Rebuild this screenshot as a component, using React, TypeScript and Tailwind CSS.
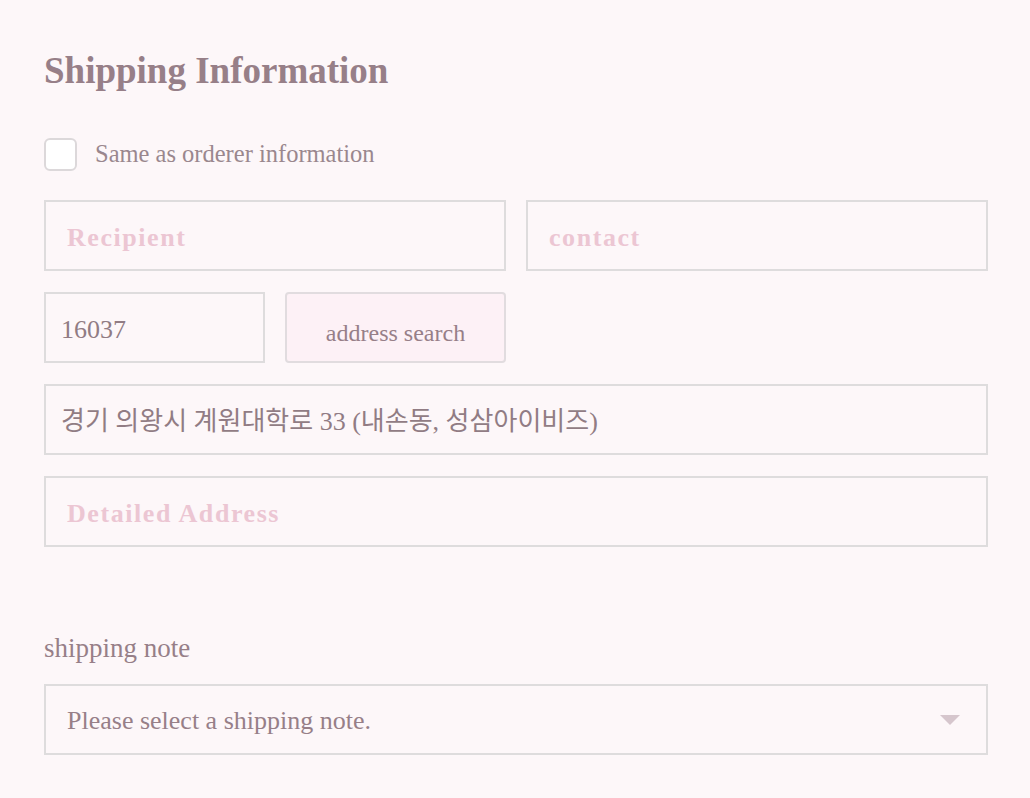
import React from "react";

const serif = "font-['Liberation_Serif','Noto_Sans_CJK_KR',serif]";

function Field({
  placeholder,
  value,
  className = "",
}: {
  placeholder?: string;
  value?: string;
  className?: string;
}) {
  return (
    <div
      className={`flex h-[71px] items-center border-2 border-[#dedcdd] bg-[#fdf7f9] pt-[4px] ${value ? "pl-[15px]" : "pl-[21px]"} ${className}`}
    >
      {value ? (
        <span className="text-[26px] text-[#917c84]">{value}</span>
      ) : (
        <span className="text-[26px] font-bold tracking-[0.06em] text-[#ecc6d3]">
          {placeholder}
        </span>
      )}
    </div>
  );
}

export default function App() {
  return (
    <div className={`min-h-[798px] w-full bg-[#fdf7f9] ${serif}`}>
      <div className="ml-[44px] flex w-[944px] flex-col pt-[48px]">
        <h2 className="text-[37px] font-bold leading-[46px] text-[#977f88]">
          Shipping Information
        </h2>

        <label className="mt-[42px] flex items-center gap-[18px]">
          <span className="h-[33px] w-[33px] rounded-[6px] border-2 border-[#dcd8da] bg-white" />
          <span className="text-[24.5px] text-[#9a878e]">Same as orderer information</span>
        </label>

        <div className="mt-[27px] flex flex-col gap-[21px]">
          <div className="grid grid-cols-2 gap-[20px]">
            <Field placeholder="Recipient" />
            <Field placeholder="contact" />
          </div>
          <div className="grid grid-cols-[221px_221px] gap-[20px]">
            <Field value="16037" />
            <button
              type="button"
              className="flex h-[71px] items-center justify-center rounded-[4px] border-2 border-[#e1dcdf] bg-[#fdf1f6] pt-[12px] text-[24px] text-[#977f88]"
            >
              address search
            </button>
          </div>
          <Field value="경기 의왕시 계원대학로 33 (내손동, 성삼아이비즈)" />
          <Field placeholder="Detailed Address" />
        </div>

        <div className="mt-[81px] text-[27px] text-[#977f88]">shipping note</div>

        <div className="mt-[16px] flex h-[71px] items-center justify-between border-2 border-[#dedcdd] pl-[21px] pr-[26px]">
          <span className="pt-[2px] text-[26px] text-[#977f88]">Please select a shipping note.</span>
          <svg width="20" height="10" viewBox="0 0 20 10">
            <path d="M0 0h20L10 10z" fill="#d6c6cd" />
          </svg>
        </div>
      </div>
    </div>
  );
}
